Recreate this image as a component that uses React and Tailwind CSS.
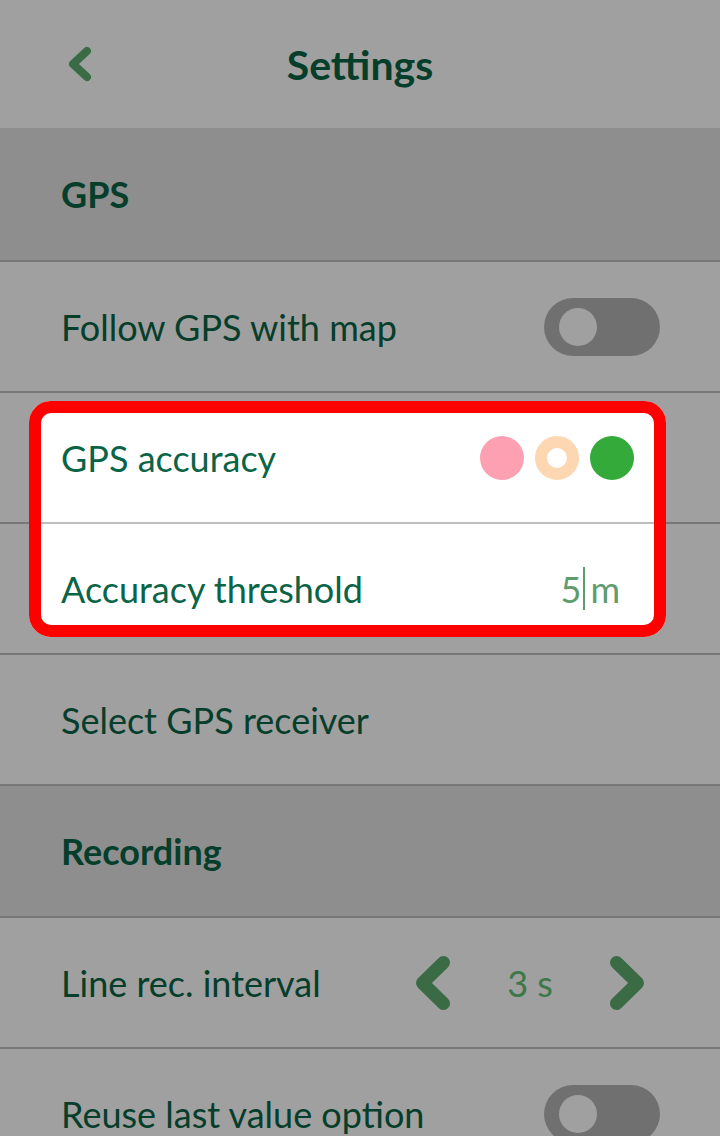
import { useState } from "react";

const FONT = { fontFamily: "Lato, 'Open Sans', sans-serif" };

function Chevron({ dir = "left", className, strokeWidth = 8, w = 24, h = 36 }) {
  const d = dir === "left"
    ? `M${w - strokeWidth / 2 - 1} ${strokeWidth / 2 + 1} L${strokeWidth / 2 + 1} ${h / 2} L${w - strokeWidth / 2 - 1} ${h - strokeWidth / 2 - 1}`
    : `M${strokeWidth / 2 + 1} ${strokeWidth / 2 + 1} L${w - strokeWidth / 2 - 1} ${h / 2} L${strokeWidth / 2 + 1} ${h - strokeWidth / 2 - 1}`;
  return (
    <svg width={w} height={h} viewBox={`0 0 ${w} ${h}`} className={className}>
      <path d={d} fill="none" stroke="currentColor" strokeWidth={strokeWidth} strokeLinecap="round" strokeLinejoin="round" />
    </svg>
  );
}

function Toggle({ on, onClick }) {
  return (
    <button
      onClick={onClick}
      className={`w-[116px] h-[58px] rounded-full flex items-center px-[15px] ${on ? "bg-[#5dab6e] justify-end" : "bg-[#b3b3b3] justify-start"}`}
    >
      <span className="w-[38px] h-[38px] rounded-full bg-white block" />
    </button>
  );
}

function Section({ title, bordered }) {
  return (
    <div className={`h-[132px] bg-[#e3e3e3] flex items-center px-[61px] ${bordered ? "border-t-2 border-[#bebebe]" : ""}`}>
      <span className="text-[36px] font-bold text-[#0a6446]">{title}</span>
    </div>
  );
}

function Row({ label, children }) {
  return (
    <div className="h-[131px] border-t-2 border-[#bebebe] flex items-center justify-between pl-[61px] pr-[60px]">
      <span className="text-[36px] text-[#0a6446]">{label}</span>
      {children}
    </div>
  );
}

export default function App() {
  const [follow, setFollow] = useState(false);
  const [reuse, setReuse] = useState(false);
  const [interval, setInterval] = useState(3);

  return (
    <div className="relative h-[1136px] overflow-hidden bg-white" style={FONT}>
      <header className="h-[128px] flex items-center">
        <div className="w-[140px] pl-[68px] text-[#5dab6e]">
          <Chevron dir="left" w={24} h={36} strokeWidth={8} />
        </div>
        <h1 className="flex-1 text-center text-[41px] font-bold text-[#0a6446] leading-none">Settings</h1>
        <div className="w-[140px]" />
      </header>

      <Section title="GPS" />
      <Row label="Follow GPS with map">
        <Toggle on={follow} onClick={() => setFollow(!follow)} />
      </Row>
      <Row label="GPS accuracy">
        <div className="flex items-center gap-[11px] mr-[26px]">
          <span className="w-[44px] h-[44px] rounded-full bg-[#fca0b2]" />
          <span className="w-[44px] h-[44px] rounded-full border-[12px] border-[#fdd6b2] bg-white" />
          <span className="w-[44px] h-[44px] rounded-full bg-[#33aa3a]" />
        </div>
      </Row>
      <Row label="Accuracy threshold">
        <div className="flex items-center mr-[40px] text-[36px] text-[#5f9c6d]">
          <span>5</span>
          <span className="w-[2px] h-[43px] bg-[#5f9c6d] ml-[2px] mr-[5px]" />
          <span>m</span>
        </div>
      </Row>
      <Row label="Select GPS receiver" />

      <Section title="Recording" bordered />
      <Row label="Line rec. interval">
        <div className="flex items-center mr-[15px] text-[#5dab6e]">
          <button onClick={() => setInterval(Math.max(1, interval - 1))}>
            <Chevron dir="left" w={36} h={56} strokeWidth={13} />
          </button>
          <span className="w-[158px] text-center text-[36px] text-[#62c074]">{interval} s</span>
          <button onClick={() => setInterval(interval + 1)}>
            <Chevron dir="right" w={36} h={56} strokeWidth={13} />
          </button>
        </div>
      </Row>
      <Row label="Reuse last value option">
        <Toggle on={reuse} onClick={() => setReuse(!reuse)} />
      </Row>

      {/* spotlight over the accuracy rows */}
      <div className="absolute left-[29px] top-[401px] w-[637px] h-[236px] border-[12px] border-[#ff0000] rounded-[22px] shadow-[0_0_0_9999px_rgba(0,0,0,0.373)] pointer-events-none" />
    </div>
  );
}
